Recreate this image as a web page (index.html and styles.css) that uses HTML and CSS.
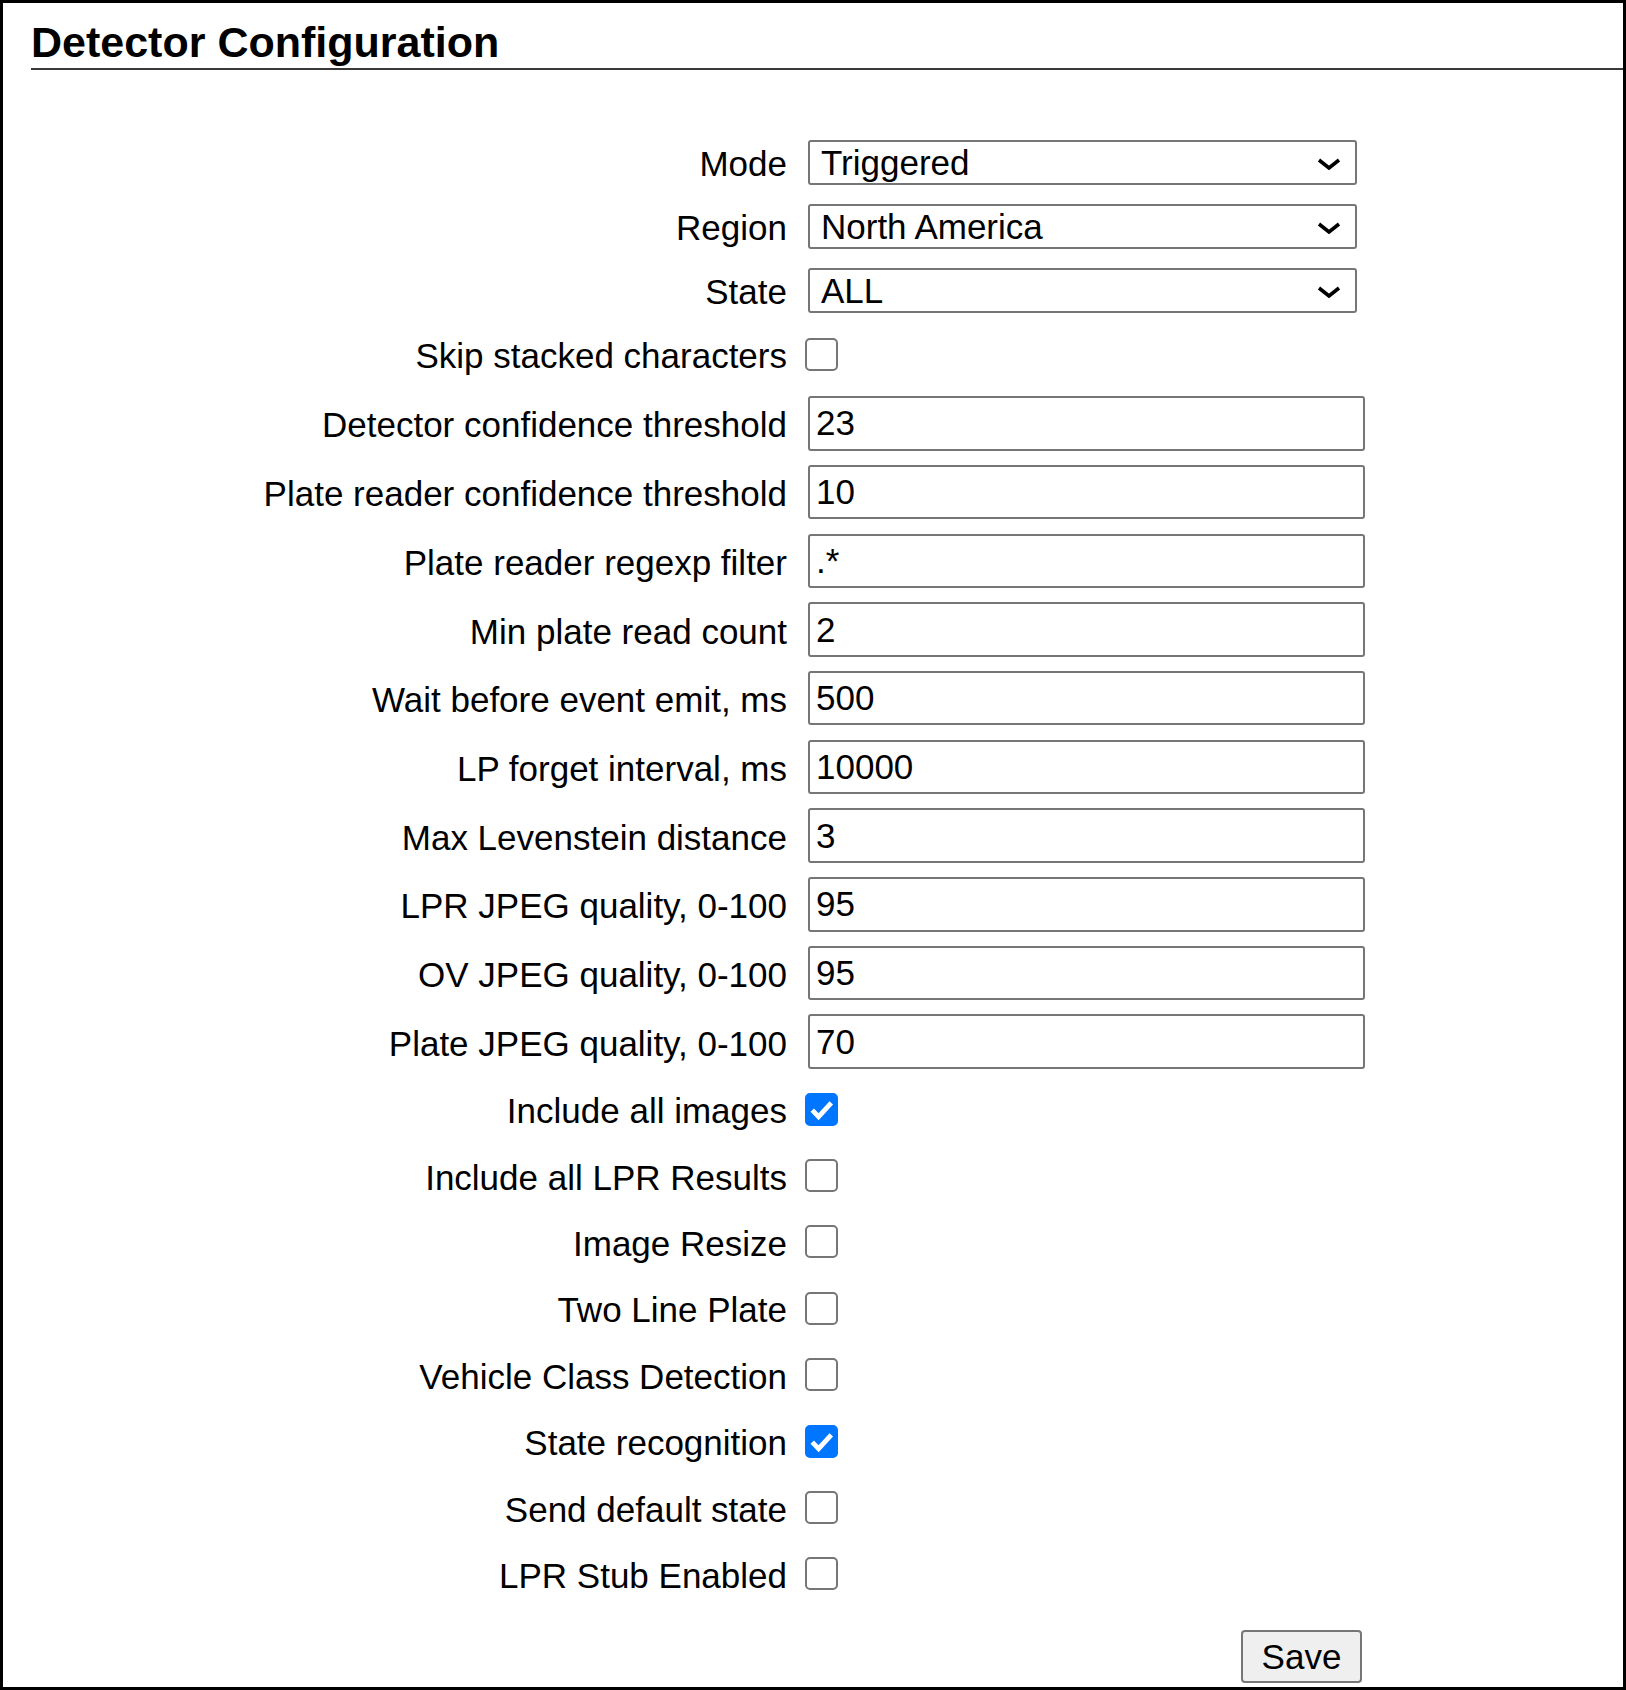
FILE: index.html
```html
<!DOCTYPE html>
<html lang="en">
<head>
<meta charset="utf-8">
<title>Detector Configuration</title>
<link rel="stylesheet" href="styles.css">
</head>
<body>
<div class="panel">
  <h1 class="title">Detector Configuration</h1>
  <form class="form">
    <div class="row row-select">
      <label class="lbl">Mode</label>
      <div class="ctl"><div class="sel-wrap"><select class="sel"><option>Triggered</option><option>Continuous</option></select><svg class="chev" viewBox="0 0 24 12"><polyline points="2,2 12,10 22,2"/></svg></div></div>
    </div>
    <div class="row row-select">
      <label class="lbl">Region</label>
      <div class="ctl"><div class="sel-wrap"><select class="sel"><option>North America</option><option>Europe</option></select><svg class="chev" viewBox="0 0 24 12"><polyline points="2,2 12,10 22,2"/></svg></div></div>
    </div>
    <div class="row row-select">
      <label class="lbl">State</label>
      <div class="ctl"><div class="sel-wrap"><select class="sel"><option>ALL</option></select><svg class="chev" viewBox="0 0 24 12"><polyline points="2,2 12,10 22,2"/></svg></div></div>
    </div>
    <div class="row row-check">
      <label class="lbl">Skip stacked characters</label>
      <div class="ctl"><span class="cbw"><input type="checkbox" class="cb"></span></div>
    </div>
    <div class="row row-input first-input">
      <label class="lbl">Detector confidence threshold</label>
      <div class="ctl"><input type="text" class="txt" value="23"></div>
    </div>
    <div class="row row-input">
      <label class="lbl">Plate reader confidence threshold</label>
      <div class="ctl"><input type="text" class="txt" value="10"></div>
    </div>
    <div class="row row-input">
      <label class="lbl">Plate reader regexp filter</label>
      <div class="ctl"><input type="text" class="txt" value=".*"></div>
    </div>
    <div class="row row-input">
      <label class="lbl">Min plate read count</label>
      <div class="ctl"><input type="text" class="txt" value="2"></div>
    </div>
    <div class="row row-input">
      <label class="lbl">Wait before event emit, ms</label>
      <div class="ctl"><input type="text" class="txt" value="500"></div>
    </div>
    <div class="row row-input">
      <label class="lbl">LP forget interval, ms</label>
      <div class="ctl"><input type="text" class="txt" value="10000"></div>
    </div>
    <div class="row row-input">
      <label class="lbl">Max Levenstein distance</label>
      <div class="ctl"><input type="text" class="txt" value="3"></div>
    </div>
    <div class="row row-input">
      <label class="lbl">LPR JPEG quality, 0-100</label>
      <div class="ctl"><input type="text" class="txt" value="95"></div>
    </div>
    <div class="row row-input">
      <label class="lbl">OV JPEG quality, 0-100</label>
      <div class="ctl"><input type="text" class="txt" value="95"></div>
    </div>
    <div class="row row-input">
      <label class="lbl">Plate JPEG quality, 0-100</label>
      <div class="ctl"><input type="text" class="txt" value="70"></div>
    </div>
    <div class="row row-cb">
      <label class="lbl">Include all images</label>
      <div class="ctl"><span class="cbw"><input type="checkbox" class="cb" checked><svg class="tick" viewBox="0 0 32 32"><polyline points="7,16.5 13.2,23 25.5,9.5"/></svg></span></div>
    </div>
    <div class="row row-cb">
      <label class="lbl">Include all LPR Results</label>
      <div class="ctl"><span class="cbw"><input type="checkbox" class="cb"></span></div>
    </div>
    <div class="row row-cb">
      <label class="lbl">Image Resize</label>
      <div class="ctl"><span class="cbw"><input type="checkbox" class="cb"></span></div>
    </div>
    <div class="row row-cb">
      <label class="lbl">Two Line Plate</label>
      <div class="ctl"><span class="cbw"><input type="checkbox" class="cb"></span></div>
    </div>
    <div class="row row-cb">
      <label class="lbl">Vehicle Class Detection</label>
      <div class="ctl"><span class="cbw"><input type="checkbox" class="cb"></span></div>
    </div>
    <div class="row row-cb">
      <label class="lbl">State recognition</label>
      <div class="ctl"><span class="cbw"><input type="checkbox" class="cb" checked><svg class="tick" viewBox="0 0 32 32"><polyline points="7,16.5 13.2,23 25.5,9.5"/></svg></span></div>
    </div>
    <div class="row row-cb">
      <label class="lbl">Send default state</label>
      <div class="ctl"><span class="cbw"><input type="checkbox" class="cb"></span></div>
    </div>
    <div class="row row-cb">
      <label class="lbl">LPR Stub Enabled</label>
      <div class="ctl"><span class="cbw"><input type="checkbox" class="cb"></span></div>
    </div>
    <div class="row row-save">
      <div class="lbl"></div>
      <div class="ctl ctl-end"><button type="button" class="btn">Save</button></div>
    </div>
  </form>
</div>
</body>
</html>
```

FILE: styles.css
```css
html, body {
  margin: 0;
  padding: 0;
  background: #ffffff;
}

body {
  font-family: "Liberation Sans", Arial, sans-serif;
  color: #000000;
}

.panel {
  box-sizing: border-box;
  width: 1626px;
  height: 1690px;
  border: 3px solid #000000;
  overflow: hidden;
}

.title {
  margin: 0 0 0 28px;
  padding: 14.6px 0 1.4px 0;
  font-size: 43px;
  line-height: 49px;
  font-weight: bold;
  border-bottom: 2px solid #3a3a3a;
}

.form {
  margin: 0;
  padding-top: 60.5px;
}

.row {
  display: flex;
  align-items: center;
}

.row-select,
.row-check {
  height: 64px;
}

.row-input {
  height: 68.7px;
}

.first-input {
  margin-top: 2.65px;
}

.row-cb {
  height: 66.4px;
}

.row-save {
  margin-top: 23px;
  height: 53px;
}

.lbl {
  box-sizing: border-box;
  width: 784px;
  flex: none;
  padding-top: 4px;
  text-align: right;
  font-size: 35px;
  line-height: 40px;
  white-space: nowrap;
}

.ctl {
  margin-left: 21px;
  width: 557px;
  flex: none;
  display: flex;
  align-items: center;
}

.ctl-end {
  justify-content: flex-end;
}

.sel-wrap {
  position: relative;
  width: 548.5px;
  height: 45px;
}

.sel {
  appearance: none;
  -webkit-appearance: none;
  box-sizing: border-box;
  width: 100%;
  height: 100%;
  margin: 0;
  padding: 0 0 0 11px;
  border: 2px solid #767676;
  border-radius: 3px;
  background: #ffffff;
  color: #000000;
  font-family: "Liberation Sans", Arial, sans-serif;
  font-size: 35px;
  line-height: 41px;
}

.chev {
  position: absolute;
  right: 16px;
  top: 18px;
  width: 24px;
  height: 12px;
  pointer-events: none;
}

.chev polyline {
  fill: none;
  stroke: #000000;
  stroke-width: 3.6;
}

.txt {
  box-sizing: border-box;
  width: 557px;
  height: 54.5px;
  margin: 0;
  padding: 0 6px;
  border: 2px solid #767676;
  border-radius: 3px;
  background: #ffffff;
  color: #000000;
  font-family: "Liberation Sans", Arial, sans-serif;
  font-size: 35px;
}

.cbw {
  position: relative;
  display: inline-flex;
  width: 33px;
  height: 33px;
  margin-left: -3.5px;
}

.cb {
  appearance: none;
  -webkit-appearance: none;
  box-sizing: border-box;
  width: 33px;
  height: 33px;
  margin: 0;
  border: 2.5px solid #767676;
  border-radius: 5px;
  background: #ffffff;
}

.cb:checked {
  background: #0075ff;
  border-color: #0075ff;
}

.tick {
  position: absolute;
  left: 0;
  top: 0;
  width: 33px;
  height: 33px;
  pointer-events: none;
}

.tick polyline {
  fill: none;
  stroke: #ffffff;
  stroke-width: 4.6;
}

.btn {
  box-sizing: border-box;
  width: 121px;
  height: 53px;
  margin: 0 3px 0 0;
  padding: 0;
  border: 2px solid #767676;
  border-radius: 4px;
  background: #efefef;
  color: #000000;
  font-family: "Liberation Sans", Arial, sans-serif;
  font-size: 35px;
  line-height: 47px;
}
```
